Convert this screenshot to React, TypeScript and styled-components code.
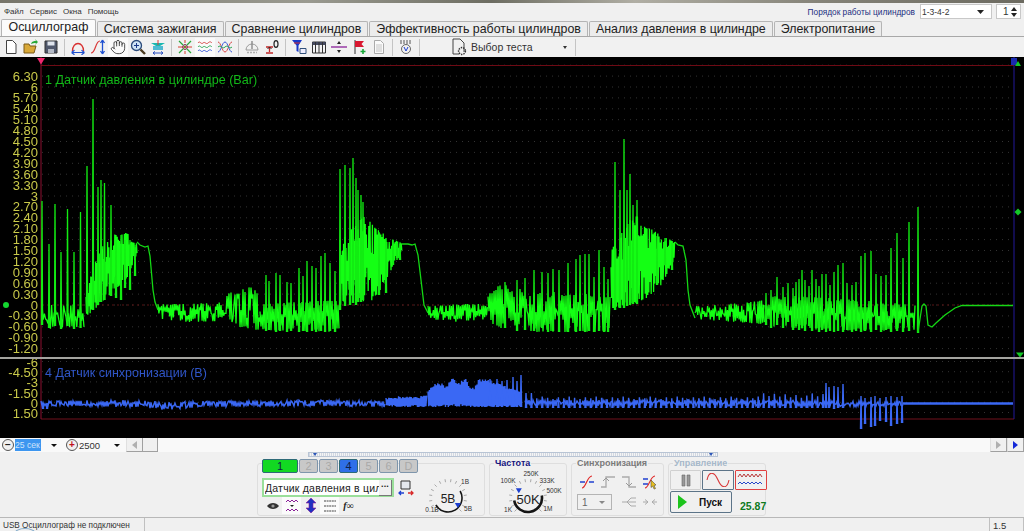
import React from 'react';
import styled, { createGlobalStyle } from 'styled-components';
import { Hand } from 'lucide-react';

type Env = [number, number, number][];
type Spike = [number, number, number];

const makeRand = (start: number) => {
  let seed = start;
  return () => {
    seed = (seed * 16807) % 2147483647;
    return seed / 2147483647;
  };
};

const envAt = (env: Env, x: number): [number, number] => {
  for (let i = 1; i < env.length; i++) {
    if (x <= env[i][0]) {
      const [x0, t0, b0] = env[i - 1];
      const [x1, t1, b1] = env[i];
      const k = (x - x0) / (x1 - x0 || 1);
      return [t0 + (t1 - t0) * k, b0 + (b1 - b0) * k];
    }
  }
  const last = env[env.length - 1];
  return [last[1], last[2]];
};

const noisePath = (env: Env, step: number, rand: () => number, slack = 0.85) => {
  let d = '';
  let up = true;
  for (let x = env[0][0]; x <= env[env.length - 1][0]; x += step) {
    const [t, b] = envAt(env, x);
    const r = rand();
    const y = up ? t + (b - t) * r * r * slack : b - (b - t) * r * r * slack;
    d += `${d ? 'L' : 'M'}${x.toFixed(1)} ${y.toFixed(1)}`;
    up = !up;
  }
  return d;
};

const spikePath = (list: Spike[]) =>
  list.map(([x, t, b]) => `M${x - 0.5} ${b}L${x} ${t}L${x + 0.6} ${b}`).join('');

const greenRand = makeRand(4711);
const blueRand = makeRand(2207);

const greenSpikes: Spike[] = [
  [42, 201, 325], [49, 244, 328], [55, 204, 326], [61, 252, 329], [67.5, 209, 326], [74, 252, 329], [80.5, 212, 328],
  [87, 166, 312], [93, 99, 310], [98, 187, 305], [101, 180, 302], [104.5, 183, 300], [111, 205, 296], [116, 240, 298], [121, 235, 300], [125, 240, 288], [130, 240, 290], [135, 245, 276],
  [266, 275, 331], [269, 281, 330], [276, 273, 332], [280, 275, 331], [287, 282, 332], [291, 283, 331], [299, 268, 332], [303, 276, 331], [307, 261, 332], [312, 266, 331], [316, 268, 332], [321, 256, 331], [325, 253, 332], [330, 263, 331], [335, 271, 332],
  [340, 169, 310], [345, 165, 306], [350, 168, 305], [353, 158, 303], [356, 178, 305], [358, 190, 302], [361, 195, 302], [363, 202, 300],
  [379, 232, 295], [386, 238, 293], [393, 240, 265], [397, 243, 258], [400, 244, 260],
  [505, 282, 328], [517, 280, 331], [525, 278, 330], [534, 270, 331], [542, 272, 328], [548, 273, 332], [553, 269, 331], [559, 270, 332], [568, 263, 332], [576, 259, 332], [580, 255, 331], [585, 254, 332], [589, 254, 331], [594, 277, 332], [599, 250, 331], [604, 267, 332], [608, 279, 332],
  [615, 162, 310], [620, 190, 308], [624, 139, 308], [627, 190, 306], [630, 174, 305], [633, 205, 304], [637, 200, 304],
  [657, 236, 285], [665, 238, 265], [672, 243, 270],
  [766, 293, 325], [771, 290, 328], [777, 277, 325], [783, 287, 328], [788, 283, 322], [793, 288, 330], [796, 282, 326], [799, 279, 330], [802, 270, 328], [805, 280, 331], [809, 286, 326], [812, 270, 331], [816, 279, 328], [819, 286, 332], [822, 274, 330], [826, 274, 332], [830, 285, 331], [834, 272, 332], [838, 265, 331], [843, 263, 332], [847, 283, 330], [852, 285, 332], [856, 282, 331], [861, 256, 332], [865, 253, 331], [871, 251, 332], [876, 274, 330], [881, 276, 332], [886, 275, 330], [891, 248, 332], [897, 233, 331], [903, 258, 332], [909, 222, 331], [918, 207, 333],
];

const greenBands: { env: Env; step: number; slack?: number }[] = [
  { env: [[42, 305, 329], [85, 303, 329]], step: 1.2 },
  { env: [[86, 296, 316], [92, 270, 312], [100, 250, 304], [113, 232, 292], [127, 233, 278], [137, 241, 255]], step: 0.6, slack: 0.4 },
  { env: [[158, 304, 319], [190, 304, 322], [225, 302, 321]], step: 0.9, slack: 0.7 },
  { env: [[225, 298, 324], [235, 286, 326], [245, 283, 328], [260, 293, 331]], step: 1.0 },
  { env: [[260, 304, 331], [339, 300, 332]], step: 1.0, slack: 0.5 },
  { env: [[340, 240, 305], [365, 215, 301], [375, 228, 300], [390, 238, 272], [402, 243, 252]], step: 0.6, slack: 0.4 },
  { env: [[428, 306, 319], [460, 304, 322], [488, 304, 319]], step: 0.9, slack: 0.7 },
  { env: [[488, 294, 323], [500, 284, 330], [520, 288, 332], [610, 296, 332]], step: 1.0, slack: 0.6 },
  { env: [[611, 250, 310], [630, 220, 304], [640, 214, 302], [650, 228, 296], [660, 235, 288], [675, 242, 258]], step: 0.6, slack: 0.4 },
  { env: [[695, 306, 319], [730, 304, 322], [765, 300, 324]], step: 0.9, slack: 0.7 },
  { env: [[765, 296, 326], [800, 296, 330], [915, 304, 331]], step: 1.0, slack: 0.6 },
];

const greenLines =
  'M137 242L140 245L145 247L148 246L150 256L153 290L155 302L158 310' +
  'M402 244L408 244L412 245L415 244L418 255L421 280L424 305L428 313' +
  'M675 242L678 245L683 246L686 260L688 290L690 305L695 318' +
  'M918 332L922 306L924 304L926 306L928 325L932 327L936 323L945 315L955 308L962 305.5L1013 305.5';

const greenTrace = greenBands.map((b) => noisePath(b.env, b.step, greenRand, b.slack)).join('');

const blueSpikes: Spike[] = [
  [43, 403, 409], [47, 403, 409],
  [826, 383, 408], [829, 387, 408], [834, 386, 409], [838, 387, 408], [843, 384, 408],
  [861, 396, 429], [865, 398, 424], [871, 397, 427], [875, 396, 426], [880, 398, 421], [886, 397, 422], [891, 396, 426], [897, 397, 424], [902, 396, 423],
  [490, 379, 406], [497, 379, 407], [502, 381, 407], [507, 380, 407], [513, 377, 407], [517, 381, 407], [521, 375, 407],
];
for (let x = 526; x < 825; x += 5.4) blueSpikes.push([x, x < 535 ? 393 : x > 760 ? 393 + ((x * 7) % 5) : 396 + ((x * 3) % 3), 408]);

const blueBands: { env: Env; step: number; slack?: number }[] = [
  { env: [[41, 401, 406], [140, 400, 407], [165, 402, 410], [200, 401, 407], [330, 400, 406], [385, 401, 407]], step: 1.0 },
  { env: [[386, 398, 406], [400, 396, 407], [413, 397, 407], [427, 395, 407]], step: 0.7, slack: 0.2 },
  {
    env: [[428, 390, 407], [436, 383, 407], [442, 383, 407], [445, 388, 407], [453, 377, 407], [457, 384, 407], [461, 381, 407], [466, 379, 407], [470, 387, 407], [474, 388, 407], [479, 379, 407], [487, 379, 407], [521, 392, 407]],
    step: 0.7,
    slack: 0.12,
  },
  { env: [[525, 400, 406], [760, 400, 406], [860, 401, 407], [903, 401, 406]], step: 1.0 },
];
const blueTrace = blueBands.map((b) => noisePath(b.env, b.step, blueRand, b.slack)).join('');

const pressureTicks = Array.from({ length: 26 }, (_, i) => {
  const v = 21 - i;
  const label = v % 10 === 0 && v !== 0 ? String(v * 0.3) : v === 0 ? '0' : (v * 0.3).toFixed(2);
  return { y: 305 - v * 10.9, label };
});
const syncTicks = [
  { y: 362, label: '-6' },
  { y: 372, label: '-4.50' },
  { y: 382.5, label: '-3' },
  { y: 393, label: '-1.50' },
  { y: 403, label: '0' },
  { y: 413, label: '1.50' },
];

const GlobalStyle = createGlobalStyle`
  html, body { margin: 0; padding: 0; background: #f0f0f0; }
  body { font-family: "Liberation Sans", Arial, sans-serif; }
`;

const Page = styled.div`
  width: 1024px;
  height: 531px;
  overflow: hidden;
  position: relative;
  display: flex;
  flex-direction: column;
  background: #f0f0f0;
  color: #222;
`;
const WindowEdge = styled.div`
  height: 3px;
  flex: none;
  background: linear-gradient(90deg, #77756a, #9a9a90 30%, #6d6d62 48%, #b0aea4 62%, #858378 80%, #6c6a60);
`;
const MenuRow = styled.div`
  height: 17px;
  flex: none;
  display: flex;
  align-items: center;
  padding-left: 4px;
  font-size: 8px;
  color: #333;
`;
const MenuItem = styled.span`
  margin-right: 6px;
`;
const OrderLabel = styled.span`
  margin-left: auto;
  margin-right: 5px;
  font-size: 8.3px;
  color: #1c2f80;
`;
const OrderSelect = styled.div`
  width: 72px;
  height: 15px;
  box-sizing: border-box;
  background: #fff;
  border: 1px solid #c8c8c8;
  display: flex;
  align-items: center;
  justify-content: space-between;
  padding: 0 7px 0 1px;
  font-size: 8.5px;
`;
const Spinner = styled.div`
  width: 25px;
  height: 15px;
  box-sizing: border-box;
  margin: 0 3px 0 4px;
  background: #fff;
  border: 1px solid #c8c8c8;
  display: flex;
  align-items: center;
  justify-content: space-between;
  padding: 0 3px 0 6px;
  font-size: 10px;
`;
const TabBar = styled.div`
  height: 17px;
  flex: none;
  display: flex;
  align-items: flex-end;
  padding-left: 1px;
  border-bottom: 1px solid #a8a8a8;
  box-sizing: border-box;
`;
const Tab = styled.div<{ $active?: boolean }>`
  height: ${(p) => (p.$active ? 17 : 15)}px;
  box-sizing: border-box;
  padding: 0 ${(p) => (p.$active ? 6.5 : 6)}px;
  margin-right: 1px;
  border: 1px solid #b4b4b4;
  border-bottom: none;
  border-radius: 2px 2px 0 0;
  background: ${(p) => (p.$active ? '#fbfbfb' : '#ececec')};
  font-size: 12.4px;
  line-height: 14px;
  color: #222;
  white-space: nowrap;
`;
const Toolbar = styled.div`
  height: 20px;
  flex: none;
  display: flex;
  align-items: center;
  padding-left: 1px;
  background: #f1f1f1;
`;
const ToolButton = styled.div<{ $active?: boolean }>`
  width: 20px;
  height: 19px;
  flex: none;
  display: flex;
  align-items: center;
  justify-content: center;
  background: ${(p) => (p.$active ? '#fafafa' : 'transparent')};
`;
const ToolSep = styled.div`
  width: 1px;
  height: 17px;
  margin: 0 3px;
  flex: none;
  background: #c4c4c4;
`;
const TestPicker = styled.div`
  width: 121px;
  margin-left: 28px;
  display: flex;
  align-items: center;
  gap: 4px;
  font-size: 10.5px;
  color: #333;
`;
const PickerArrow = styled.span`
  margin-left: auto;
  margin-right: 5px;
  width: 0;
  height: 0;
  border-left: 2px solid transparent;
  border-right: 2px solid transparent;
  border-top: 3px solid #333;
`;
const ChartArea = styled.div`
  height: 381px;
  flex: none;
  display: flex;
  flex-direction: column;
  background: #000;
`;
const PressurePlot = styled.svg`
  display: block;
  width: 1024px;
  height: 300px;
  flex: none;
  filter: blur(0.3px);
`;
const PaneDivider = styled.div`
  height: 2px;
  flex: none;
  background: #a4a4a0;
`;
const SyncPlot = styled.svg`
  display: block;
  width: 1024px;
  height: 79px;
  flex: none;
  filter: blur(0.3px);
`;
const ScrollRow = styled.div`
  height: 14px;
  flex: none;
  display: flex;
  align-items: center;
  background: #f9f9f9;
  font-size: 9.5px;
  color: #333;
`;
const RoundButton = styled.div<{ $color: string }>`
  width: 10px;
  height: 10px;
  flex: none;
  margin: 0 1px 0 2px;
  border: 1px solid #555;
  border-radius: 50%;
  display: flex;
  align-items: center;
  justify-content: center;
  font-size: 10px;
  line-height: 10px;
  font-weight: bold;
  color: ${(p) => p.$color};
  background: #f0f0f0;
`;
const SelectedValue = styled.span`
  width: 26px;
  flex: none;
  background: #3d96f0;
  color: #cfe4fb;
  font-size: 8.6px;
  white-space: nowrap;
  line-height: 12px;
`;
const ValueText = styled.span`
  width: 35px;
  flex: none;
`;
const DownArrow = styled.span<{ $left: number; $right: number }>`
  flex: none;
  width: 0;
  height: 0;
  margin: 0 ${(p) => p.$right}px 0 ${(p) => p.$left}px;
  border-left: 3px solid transparent;
  border-right: 3px solid transparent;
  border-top: 3px solid #111;
`;
const ScrollButton = styled.div<{ $color?: string; $flip?: boolean }>`
  width: 17px;
  height: 14px;
  flex: none;
  box-sizing: border-box;
  background: #f0f0f0;
  border-right: 1px solid #a0a0a0;
  border-bottom: 1px solid #a0a0a0;
  border-left: 1px solid #e0e0e0;
  display: flex;
  align-items: center;
  justify-content: center;
  &::before {
    content: '';
    width: 0;
    height: 0;
    border-top: 4px solid transparent;
    border-bottom: 4px solid transparent;
    ${(p) => (p.$flip ? 'border-right' : 'border-left')}: 5px solid ${(p) => p.$color || '#b0b0b0'};
  }
`;
const ScrollThumb = styled.div`
  width: 15px;
  height: 14px;
  flex: none;
  box-sizing: border-box;
  background: #f0f0f0;
  border-right: 1px solid #a0a0a0;
  border-bottom: 1px solid #a0a0a0;
`;
const ScrollTrack = styled.div`
  flex: 1;
`;
const ControlArea = styled.div`
  height: 65px;
  flex: none;
  display: flex;
  flex-direction: column;
  align-items: center;
  background: #f0f0f0;
`;
const Splitter = styled.div`
  width: 410px;
  height: 5px;
  flex: none;
  margin-left: 2px;
  box-sizing: border-box;
  border: 1px solid #b8c4d4;
  background: repeating-linear-gradient(90deg, #d2d8e2 0 1px, #f4f4f4 1px 2px);
  display: flex;
  justify-content: space-between;
  align-items: flex-start;
  padding: 0 4px;
  &::before, &::after {
    content: '';
    width: 0;
    height: 0;
    border-left: 2px solid transparent;
    border-right: 2px solid transparent;
    border-top: 3px solid #2b55b8;
  }
`;
const PanelRow = styled.div`
  align-self: flex-start;
  margin-left: 257px;
  margin-top: 2px;
  height: 58px;
  display: flex;
  gap: 4px;
`;
const Panel = styled.div<{ $width: number }>`
  width: ${(p) => p.$width}px;
  height: 53px;
  margin-top: 4px;
  box-sizing: border-box;
  position: relative;
  border: 1px solid #dedede;
  border-radius: 3px;
  display: flex;
`;
const PanelTitle = styled.div<{ $color: string }>`
  position: absolute;
  top: -6px;
  left: 4px;
  padding: 0 1px;
  font-size: 9px;
  line-height: 11px;
  font-weight: bold;
  white-space: nowrap;
  background: #f0f0f0;
  color: ${(p) => p.$color};
`;
const ChannelColumn = styled.div`
  width: 163px;
  flex: none;
  margin-top: -5px;
  margin-left: 4px;
  display: flex;
  flex-direction: column;
`;
const ChannelTabs = styled.div`
  display: flex;
  gap: 1px;
  height: 14px;
  flex: none;
`;
const ChannelButton = styled.div<{ $state: 'on' | 'blue' | 'off'; $wide?: boolean }>`
  width: ${(p) => (p.$wide ? 36 : 19)}px;
  height: 14px;
  box-sizing: border-box;
  border: 1px solid ${(p) => (p.$state === 'off' ? '#7f96ac' : '#2e6a78')};
  border-radius: 2px;
  font-size: 11px;
  line-height: 12px;
  text-align: center;
  color: ${(p) => (p.$state === 'off' ? '#a8a8a8' : '#10204a')};
  background: ${(p) =>
    p.$state === 'on' ? '#12d822' : p.$state === 'blue' ? '#2f6fe8' : '#c8c8c8'};
`;
const SensorRow = styled.div`
  display: flex;
  align-items: center;
  margin-top: 5px;
  height: 19px;
  flex: none;
`;
const SensorCombo = styled.div`
  width: 132px;
  height: 19px;
  flex: none;
  box-sizing: border-box;
  border: 2px solid #9adf9a;
  background: #fff;
  display: flex;
  align-items: center;
  font-size: 10.5px;
  letter-spacing: 0.2px;
  white-space: nowrap;
  padding-left: 1px;
`;
const SensorName = styled.span`
  flex: 1;
  min-width: 0;
  overflow: hidden;
`;
const DotsButton = styled.span`
  width: 12px;
  height: 15px;
  flex: none;
  text-align: center;
  line-height: 8px;
  font-size: 9px;
  font-weight: bold;
  background: #f0f0f0;
  border-right: 1px solid #777;
  border-bottom: 1px solid #777;
`;
const SwapIcon = styled.div`
  margin-left: 4px;
  display: flex;
`;
const ChannelTools = styled.div`
  display: flex;
  margin-left: 1px;
  height: 17px;
  flex: none;
`;
const ChannelTool = styled.div<{ $active?: boolean }>`
  width: 19px;
  height: 17px;
  display: flex;
  align-items: center;
  justify-content: center;
  background: ${(p) => (p.$active ? '#fbfbfb' : 'transparent')};
  font-family: "Liberation Serif", serif;
  font-style: italic;
  font-weight: bold;
  font-size: 10px;
`;
const KnobBox = styled.svg`
  display: block;
  flex: none;
`;
const SyncGrid = styled.div`
  display: grid;
  grid-template-columns: repeat(4, 21px);
  grid-template-rows: 21px 20px;
  padding: 7px 0 0 4px;
  align-items: center;
  justify-items: center;
`;
const SyncCombo = styled.div`
  grid-column: span 2;
  justify-self: start;
  margin-left: 1px;
  width: 35px;
  height: 16px;
  box-sizing: border-box;
  border: 1px solid #b4b4b4;
  display: flex;
  align-items: center;
  justify-content: space-between;
  padding: 0 6px 0 4px;
  font-size: 10px;
  color: #666;
`;
const ManageGrid = styled.div`
  display: grid;
  grid-template-columns: 31px 32px 32px;
  grid-template-rows: 20px 22px;
  gap: 1px;
  padding: 6px 0 0 1px;
`;
const ModeButton = styled.div<{ $border: string }>`
  box-sizing: border-box;
  border: 1px solid ${(p) => p.$border};
  border-radius: 1px;
  display: flex;
  align-items: center;
  justify-content: center;
  background: #f0f0f0;
`;
const StartButton = styled.div`
  grid-column: span 2;
  width: 62px;
  box-sizing: border-box;
  border: 1px solid #5c7488;
  border-radius: 2px;
  display: flex;
  align-items: center;
  gap: 12px;
  padding-left: 7px;
  font-size: 10px;
  font-weight: bold;
  color: #111;
`;
const PlayMark = styled.span`
  width: 0;
  height: 0;
  border-top: 7px solid transparent;
  border-bottom: 7px solid transparent;
  border-left: 9px solid #1cc41c;
`;
const Timer = styled.div`
  align-self: end;
  font-size: 10.5px;
  font-weight: bold;
  color: #0e7a1e;
  margin-left: 5px;
  line-height: 13px;
`;
const StatusBar = styled.div`
  height: 14px;
  flex: none;
  box-sizing: border-box;
  display: flex;
  border-top: 1px solid #b8b8b8;
  font-size: 8.2px;
  line-height: 16px;
  color: #333;
  overflow: hidden;
`;
const StatusCell = styled.div<{ $width?: number; $size?: number }>`
  ${(p) => (p.$width ? `width: ${p.$width}px; flex: none;` : 'flex: 1;')}
  ${(p) => (p.$size ? `font-size: ${p.$size}px;` : '')}
  box-sizing: border-box;
  padding-left: 3px;
  border-right: 1px solid #c0c0c0;
  white-space: nowrap;
`;
const BusyRing = styled.div`
  position: absolute;
  left: 14px;
  bottom: -9px;
  width: 20px;
  height: 10px;
  border: 1px solid #7fa8c8;
  border-radius: 50%;
`;

const Knob = ({ label, cx, cy, labels, arcStart, arcEnd, pointer, radius, width, height, fontSize, arcWidth }: {
  label: string; cx: number; cy: number; radius: number; width: number; height: number; fontSize: number; arcWidth: number;
  labels: { x: number; y: number; t: string }[]; arcStart: number; arcEnd: number; pointer: number;
}) => {
  const pt = (a: number, r: number) => {
    const rad = (a * Math.PI) / 180;
    return [cx + Math.cos(rad) * r, cy + Math.sin(rad) * r];
  };
  const [ax, ay] = pt(arcStart, radius);
  const [bx, by] = pt(arcEnd, radius);
  const large = Math.abs(arcEnd - arcStart) > 180 ? 1 : 0;
  const [px, py] = pt(pointer, radius - 2);
  return (
    <KnobBox width={width} height={height} viewBox={`0 0 ${width} ${height}`}>
      {Array.from({ length: 16 }, (_, i) => {
        const a = -225 + i * 18;
        const [x1, y1] = pt(a, radius + 2);
        const [x2, y2] = pt(a, radius + 5);
        return <line key={i} x1={x1} y1={y1} x2={x2} y2={y2} stroke="#a8a8a8" strokeWidth="1" />;
      })}
      <path d={`M${ax} ${ay}A${radius} ${radius} 0 ${large} 1 ${bx} ${by}`} fill="none" stroke="#151515" strokeWidth={arcWidth} />
      <path d={`M${px - 3} ${py - 2}L${px + 3} ${py - 2}L${px} ${py + 3}z`} fill="#1c3fd0" />
      <text x={cx} y={cy + fontSize / 2 - 1} textAnchor="middle" fontSize={fontSize} fill="#222">{label}</text>
      {labels.map((l) => (
        <text key={l.t} x={l.x} y={l.y} textAnchor="middle" fontSize="6.5" fill="#333">{l.t}</text>
      ))}
    </KnobBox>
  );
};

const Caret = () => (
  <svg width="7" height="4" viewBox="0 0 7 4"><path d="M0 0h7L3.5 4z" fill="#222" /></svg>
);

const I = ({ children, w = 16, h = 16 }: { children: React.ReactNode; w?: number; h?: number }) => (
  <svg width={w} height={h} viewBox="0 0 16 16" fill="none">{children}</svg>
);

const ToolIcons: Record<string, React.ReactNode> = {
  page: <I><path d="M3.5 1.5h6l3.5 3.5v9.5h-9.5z" fill="#fff" stroke="#444" /></I>,
  folder: <I><path d="M1 5h5l1 2h6l-2 7H1z" fill="#d8a838" stroke="#7a5a18" /><path d="M8 5c1-3 3-3 5-3l-1-2 3 3-3 3 1-2c-2 0-3 0-5 1z" fill="#28a838" /></I>,
  save: <I><path d="M2 2h12v12H2z" fill="#50586c" stroke="#333" /><path d="M4.5 2.5h7v4h-7z" fill="#dfe4ec" /><path d="M5 10h6v4H5z" fill="#b4bac6" /></I>,
  arc: <I><path d="M2.5 12C2.5 2 13.5 2 13.5 12" stroke="#d83030" strokeWidth="1.4" /><path d="M1.5 13.5h13M1.5 13.5l3-2.3M1.5 13.5l3 2.3M14.5 13.5l-3-2.3M14.5 13.5l-3 2.3" stroke="#1e50d0" strokeWidth="1.2" /></I>,
  scurve: <I><path d="M1 14C6 14 5 2 10 2" stroke="#d83838" strokeWidth="1.2" /><path d="M12.5 1v14M12.5 1L10.5 4M12.5 1l2 3M12.5 15l-2-3M12.5 15l2-3" stroke="#1e50d0" strokeWidth="1.3" /></I>,
  lens: <I><circle cx="6.5" cy="6.5" r="5" fill="#cfe4f6" stroke="#2a4a7a" strokeWidth="1.3" /><path d="M4 6.5h5M6.5 4v5" stroke="#1a3a8a" /><path d="M10.5 10.5l4.5 4.5" stroke="#4a3a20" strokeWidth="2.4" /></I>,
  stack: <I><path d="M1 4h14l-5 3H6z" fill="#18b8b0" /><path d="M3 8h10M3 10h10" stroke="#18a8c8" strokeWidth="1.3" /><path d="M8 1v5" stroke="#e03838" /><path d="M3 14h10M3 14l2-1.6M3 14l2 1.6M13 14l-2-1.6M13 14l-2 1.6" stroke="#2a50c0" /></I>,
  star: <I><path d="M2 2l12 12M14 2L2 14" stroke="#28a838" strokeWidth="1.2" /><path d="M8 1v3M8 12v3M1 8h14" stroke="#d84030" /><path d="M5 8l3-3 3 3-3 3z" stroke="#a83878" /></I>,
  waves: <I><path d="M1 4c2-3 3 2 5 0s3 2 5 0 3-1 4 0" stroke="#d84848" /><path d="M1 8c2-3 3 2 5 0s3 2 5 0 3-1 4 0" stroke="#30a858" /><path d="M1 12c2-3 3 2 5 0s3 2 5 0 3-1 4 0" stroke="#3858d8" /></I>,
  twist: <I><path d="M1 3c3 0 4 10 7 10s4-10 7-10" stroke="#d84848" /><path d="M1 13c3 0 4-10 7-10s4 10 7 10" stroke="#3858d8" /><path d="M1 8c3-3 4 3 7 0s4 3 7 0" stroke="#30a858" /></I>,
  dial: <I><path d="M2 11a6 6 0 0112 0z" stroke="#9a9a9a" /><path d="M8 2v8" stroke="#8a8a8a" strokeWidth="1.4" /><path d="M3 13.5h10" stroke="#b0b0b0" strokeWidth="1.6" strokeDasharray="2 1" /></I>,
  zero: <I><path d="M2 8h7M5.5 8v5M2 14h7" stroke="#c02828" strokeWidth="1.3" /><path d="M3.5 10l2-2 2 2" stroke="#222" /><ellipse cx="12" cy="5" rx="2" ry="3.4" stroke="#222" strokeWidth="1.2" /></I>,
  funnel: <I><path d="M1 1h10L7.5 6.5V13l-2-1V6.5z" fill="#1838c8" /><path d="M9 9.5h6v5H9z" fill="#eef" stroke="#30507a" /><path d="M3 4l6 0" stroke="#d83030" /></I>,
  table: <I><path d="M1.5 3h13v11h-13z" fill="#f4f4f4" stroke="#333" /><path d="M1.5 3h13v3h-13z" fill="#454a60" /><path d="M4.5 3v11M8 3v11M11.5 3v11" stroke="#333" /></I>,
  split: <I><path d="M0 8h16" stroke="#8a1f9a" strokeWidth="1.3" /><path d="M8 2l2 3H6zM8 14l2-3H6z" fill="#222" /></I>,
  flag: <I><path d="M4 1v14" stroke="#333" /><path d="M4 2h9l-2.5 3 2.5 3H4z" fill="#d81830" /><path d="M9.5 12.5h5M12 10v5" stroke="#18a838" strokeWidth="1.6" /></I>,
  doc: <I><path d="M3.5 1.5h6l3 3v10h-9z" fill="#fafafa" stroke="#aaa" /><path d="M5 6h6M5 8h6M5 10h6M5 12h6" stroke="#c4c4c4" /></I>,
  auto: <I><path d="M2 2h12M2 4h12" stroke="#555" strokeWidth="1.2" strokeDasharray="2 1" /><circle cx="8" cy="10" r="4.5" stroke="#666" /><path d="M6 8l2 4 2-4" stroke="#1c3fd0" /></I>,
};

const toolGroups: { name: string; active?: boolean }[][] = [
  [{ name: 'page' }, { name: 'folder' }, { name: 'save' }],
  [{ name: 'arc' }, { name: 'scurve' }, { name: 'hand', active: true }, { name: 'lens' }, { name: 'stack' }],
  [{ name: 'star' }, { name: 'waves', active: true }, { name: 'twist' }],
  [{ name: 'dial' }, { name: 'zero' }],
  [{ name: 'funnel' }, { name: 'table' }, { name: 'split' }, { name: 'flag' }, { name: 'doc' }],
  [{ name: 'auto' }],
];

const tabs = ['Осциллограф', 'Система зажигания', 'Сравнение цилиндров', 'Эффективность работы цилиндров', 'Анализ давления в цилиндре', 'Электропитание'];

const gridLines = (from: number, to: number, step: number) => {
  const rows: number[] = [];
  for (let y = from; y <= to; y += step) rows.push(y);
  return rows;
};

const App = () => (
  <Page>
    <GlobalStyle />
    <WindowEdge />
    <MenuRow>
      {['Файл', 'Сервис', 'Окна', 'Помощь'].map((m) => <MenuItem key={m}>{m}</MenuItem>)}
      <OrderLabel>Порядок работы цилиндров</OrderLabel>
      <OrderSelect>1-3-4-2<Caret /></OrderSelect>
      <Spinner>1<svg width="6" height="10" viewBox="0 0 6 10"><path d="M3 0l3 4H0zM3 10l3-4H0z" fill="#222" /></svg></Spinner>
    </MenuRow>
    <TabBar>
      {tabs.map((t, i) => <Tab key={t} $active={i === 0}>{t}</Tab>)}
    </TabBar>
    <Toolbar>
      {toolGroups.map((group, i) => (
        <React.Fragment key={i}>
          {group.map((b) => (
            <ToolButton key={b.name} $active={b.active}>
              {b.name === 'hand' ? <Hand size={16} strokeWidth={1.3} color="#333" /> : ToolIcons[b.name]}
            </ToolButton>
          ))}
          <ToolSep />
        </React.Fragment>
      ))}
      <TestPicker>
        <svg width="16" height="18" viewBox="0 0 16 18" fill="none">
          <path d="M2 1h7l4 4v9" stroke="#444" /><path d="M2 1v15h6" stroke="#444" />
          <circle cx="11" cy="13" r="3.4" stroke="#333" strokeWidth="1.5" strokeDasharray="1.4 1" />
        </svg>
        Выбор теста
        <PickerArrow />
      </TestPicker>
      <ToolSep />
    </Toolbar>
    <ChartArea>
      <PressurePlot viewBox="0 57 1024 300" fontFamily="Liberation Sans, Arial, sans-serif">
        {gridLines(65.2, 350, 10.9).map((y) => (
          <line key={y} x1="42" x2="1013" y1={y} y2={y} stroke="#333" strokeDasharray="1 5" />
        ))}
        <line x1="42" x2="1013" y1="305" y2="305" stroke="#5a1414" strokeDasharray="2 3" />
        <line x1="41" x2="1014" y1="65.5" y2="65.5" stroke="#6e0a14" />
        <line x1="41" x2="41" y1="57" y2="357" stroke="#8e1030" />
        <line x1="1014" x2="1014" y1="57" y2="357" stroke="#22189a" />
        {pressureTicks.map((t) => (
          <text key={t.label} x="38" y={t.y + 4.5} textAnchor="end" fontSize="13" fill="#c9c94a">{t.label}</text>
        ))}
        <text x="45" y="83.5" fontSize="12.6" fill="#12b818">1 Датчик давления в цилиндре (Bar)</text>
        <path d={greenTrace} fill="none" stroke="#14ff14" strokeWidth="1.3" />
        <path d={spikePath(greenSpikes)} fill="none" stroke="#12ec12" strokeWidth="1.3" />
        <path d={greenLines} fill="none" stroke="#14d814" strokeWidth="1.3" />
        <path d="M37 58h8l-4 6.5z" fill="#f02870" />
        <circle cx="6" cy="305" r="3" fill="#14d830" />
        <path d="M1011 58h6v7h-6z" fill="#1a2ab0" />
        <path d="M1018 61l3 5h-6z" fill="#14c828" />
        <path d="M1018 208.5l3.5 3.5-3.5 3.5-3.5-3.5z" fill="#14c828" />
        <path d="M1016 352.5h8l-4 5z" fill="#14c828" />
      </PressurePlot>
      <PaneDivider />
      <SyncPlot viewBox="0 359 1024 79" fontFamily="Liberation Sans, Arial, sans-serif">
        {gridLines(361.5, 415, 10.2).map((y) => (
          <line key={y} x1="42" x2="1013" y1={y} y2={y} stroke="#333" strokeDasharray="1 5" />
        ))}
        <line x1="41" x2="1014" y1="419" y2="419" stroke="#70101c" />
        <line x1="41" x2="41" y1="359" y2="419" stroke="#8e1030" />
        <line x1="1014" x2="1014" y1="359" y2="419" stroke="#22189a" />
        {syncTicks.map((t) => (
          <text key={t.label} x="38" y={t.y + 4.5} textAnchor="end" fontSize="13" fill="#c9c94a">{t.label}</text>
        ))}
        <text x="45" y="376.5" fontSize="12.5" fill="#2f55c8">4 Датчик синхронизации (В)</text>
        <path d={blueTrace} fill="none" stroke="#3a68f4" strokeWidth="1.4" />
        <path d={spikePath(blueSpikes)} fill="none" stroke="#3a68f4" strokeWidth="1.4" />
        <path d="M903 403.5L1013 403.5" stroke="#3a68f4" strokeWidth="2.6" />
      </SyncPlot>
    </ChartArea>
    <ScrollRow>
      <RoundButton $color="#222">−</RoundButton>
      <SelectedValue>25 сек</SelectedValue>
      <DownArrow $left={10} $right={7} />
      <RoundButton $color="#c01020">+</RoundButton>
      <ValueText>2500</ValueText>
      <DownArrow $left={0} $right={6} />
      <ScrollButton $flip />
      <ScrollThumb />
      <ScrollTrack />
      <ScrollButton />
      <ScrollButton $color="#1428d8" />
    </ScrollRow>
    <ControlArea>
      <Splitter />
      <PanelRow>
        <Panel $width={228}>
          <ChannelColumn>
            <ChannelTabs>
              <ChannelButton $state="on" $wide>1</ChannelButton>
              <ChannelButton $state="off">2</ChannelButton>
              <ChannelButton $state="off">3</ChannelButton>
              <ChannelButton $state="blue">4</ChannelButton>
              <ChannelButton $state="off">5</ChannelButton>
              <ChannelButton $state="off">6</ChannelButton>
              <ChannelButton $state="off">D</ChannelButton>
            </ChannelTabs>
            <SensorRow>
              <SensorCombo><SensorName>Датчик давления в цил</SensorName><DotsButton>...</DotsButton></SensorCombo>
              <SwapIcon>
                <svg width="16" height="16" viewBox="0 0 16 16" fill="none">
                  <path d="M3 1h9v8H3z" fill="#e4e8ee" stroke="#333" /><path d="M1 13h5M3 11l-2 2 2 2" stroke="#1c3fd0" strokeWidth="1.3" /><path d="M15 13h-5M13 11l2 2-2 2" stroke="#d82828" strokeWidth="1.3" />
                </svg>
              </SwapIcon>
            </SensorRow>
            <ChannelTools>
              <ChannelTool>
                <svg width="12" height="8" viewBox="0 0 12 8"><path d="M0 4c3-4 9-4 12 0-3 4-9 4-12 0z" fill="#333" /><circle cx="6" cy="4" r="1.6" fill="#999" /></svg>
              </ChannelTool>
              <ChannelTool $active>
                <svg width="14" height="14" viewBox="0 0 14 14" fill="none"><path d="M1 3l2-2 2 2 2-2 2 2 2-2 2 2M1 12l2-2 2 2 2-2 2 2 2-2 2 2" stroke="#8a2098" /><path d="M5 6h4l-2 2z" fill="#222" /></svg>
              </ChannelTool>
              <ChannelTool>
                <svg width="12" height="15" viewBox="0 0 12 15"><path d="M6 0l5 5H8v5h3l-5 5-5-5h3V5H1z" fill="#2030c0" stroke="#8a2098" strokeWidth=".6" /></svg>
              </ChannelTool>
              <ChannelTool $active>
                <svg width="14" height="12" viewBox="0 0 14 12"><path d="M1 1h12M1 6h12M1 11h12" stroke="#444" strokeDasharray="2 0.6" /></svg>
              </ChannelTool>
              <ChannelTool>f∞</ChannelTool>
            </ChannelTools>
          </ChannelColumn>
          <Knob
            width={58} height={51} cx={23} cy={34} radius={14} fontSize={12} label="5В" arcWidth={1.6}
            arcStart={-30} arcEnd={150} pointer={35}
            labels={[{ x: 40, y: 20, t: '1В' }, { x: 43, y: 47, t: '5В' }, { x: 7, y: 48, t: '0.1В' }]}
          />
        </Panel>
        <Panel $width={78}>
          <PanelTitle $color="#14147e">Частота</PanelTitle>
          <Knob
            width={76} height={51} cx={38} cy={34} radius={14} fontSize={13} label="50K" arcWidth={2.6}
            arcStart={-10} arcEnd={170} pointer={-140}
            labels={[{ x: 41, y: 12, t: '250K' }, { x: 18, y: 19, t: '100K' }, { x: 57, y: 19, t: '333K' }, { x: 64, y: 29, t: '500K' }, { x: 18, y: 48, t: '1K' }, { x: 58, y: 47, t: '1M' }]}
          />
        </Panel>
        <Panel $width={93}>
          <PanelTitle $color="#7a7a7a">Синхронизация</PanelTitle>
          <SyncGrid>
            <I><path d="M1 8h5M10 8h5" stroke="#2040d0" strokeWidth="1.3" /><path d="M3 14C7 14 8 2 13 2" stroke="#e02828" strokeWidth="1.2" /></I>
            <I><path d="M1 13h5V3h9" stroke="#aaa" strokeWidth="1.3" /><path d="M3 7l3-3 3 3" stroke="#999" /></I>
            <I><path d="M1 3h7v10h7" stroke="#aaa" strokeWidth="1.3" /><path d="M5 9l3 3 3-3" stroke="#999" /></I>
            <I><path d="M1 5h5M1 10h5" stroke="#2040d0" strokeWidth="1.3" /><path d="M3 14C7 14 8 2 13 2" stroke="#e02828" strokeWidth="1.1" /><path d="M9 6l5 5-2 .5 1.5 3-1.4.6-1.4-3-1.7 1.4z" fill="#e8c020" stroke="#333" strokeWidth=".5" /></I>
            <SyncCombo>1<svg width="6" height="3" viewBox="0 0 6 3"><path d="M0 0h6L3 3z" fill="#888" /></svg></SyncCombo>
            <I><path d="M1 8h5M6 8l4-4h5M6 8h9M6 8l4 4h5" stroke="#aaa" /></I>
            <I><path d="M1 8h5M10 8h5M3 5.5L6 8 3 10.5M13 5.5L10 8l3 2.5" stroke="#aaa" /></I>
          </SyncGrid>
        </Panel>
        <Panel $width={98}>
          <PanelTitle $color="#a6b8ca">Управление</PanelTitle>
          <ManageGrid>
            <ModeButton $border="#d0d0d0">
              <svg width="10" height="13" viewBox="0 0 10 13"><path d="M1 1h3v11H1zM6 1h3v11H6z" fill="#999" stroke="#666" strokeWidth=".6" /></svg>
            </ModeButton>
            <ModeButton $border="#5c7488">
              <svg width="24" height="14" viewBox="0 0 24 14" fill="none"><path d="M1 7C3 -2 8 -2 12 7s9 9 11 0" stroke="#d83838" strokeWidth="1.1" /></svg>
            </ModeButton>
            <ModeButton $border="#e04040">
              <svg width="28" height="16" viewBox="0 0 28 16" fill="none"><path d="M1 5l2-3 2 3 2-3 2 3 2-3 2 3 2-3 2 3 2-3 2 3 2-3 2 3" stroke="#b83838" /><path d="M1 12l2-2 2 2 2-2 2 2 2-2 2 2 2-2 2 2 2-2 2 2 2-2 2 2" stroke="#2848c8" /></svg>
            </ModeButton>
            <StartButton><PlayMark />Пуск</StartButton>
            <Timer>25.87</Timer>
          </ManageGrid>
        </Panel>
      </PanelRow>
    </ControlArea>
    <StatusBar>
      <StatusCell $width={145}>USB Осциллограф не подключен</StatusCell>
      <StatusCell $width={845} />
      <StatusCell $size={9.5}>1.5</StatusCell>
    </StatusBar>
    <BusyRing />
  </Page>
);

export default App;
